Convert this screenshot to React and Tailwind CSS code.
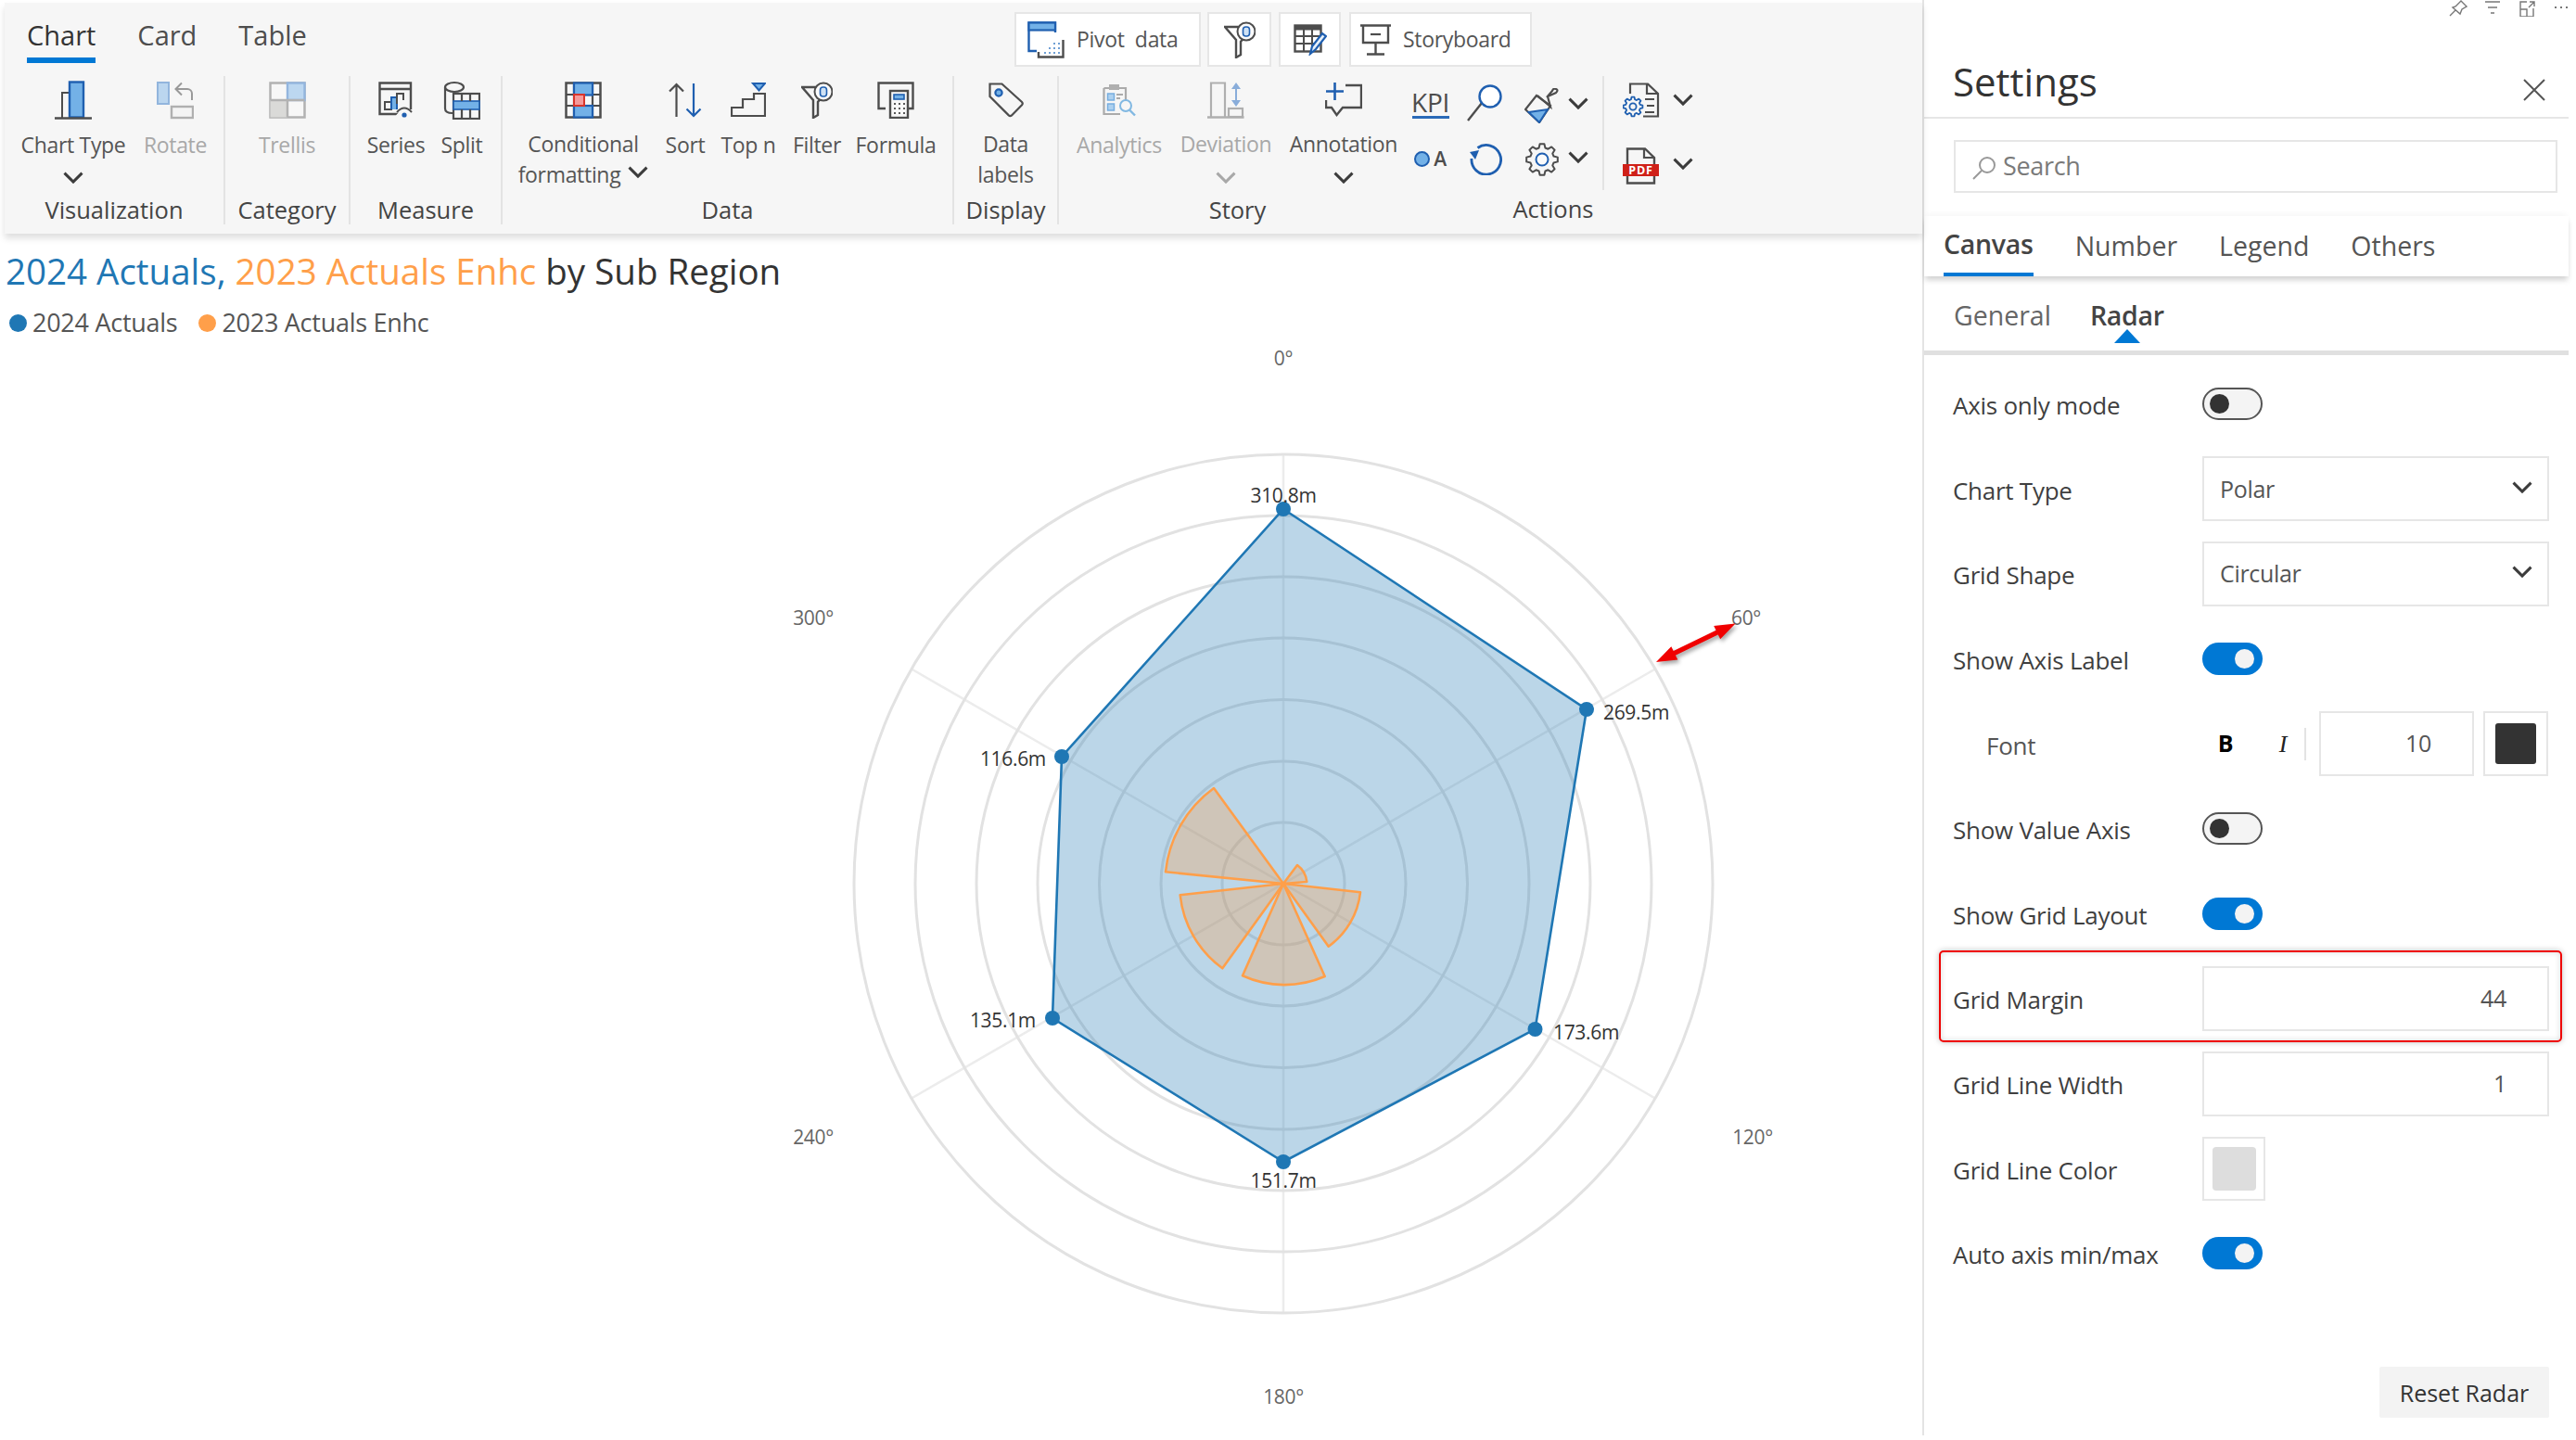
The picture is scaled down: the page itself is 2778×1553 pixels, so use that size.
import React from "react";

const G = "#4d4d4d";
const B = "#1f5fb0";
const L = "#73b1e7";

function gearPath(cx, cy, R, r, n) {
  const pts = [];
  const step = (Math.PI * 2) / n;
  for (let i = 0; i < n; i++) {
    const a = i * step - Math.PI / 2;
    const p = (rad, an) => `${(cx + rad * Math.cos(an)).toFixed(2)} ${(cy + rad * Math.sin(an)).toFixed(2)}`;
    pts.push(p(r, a - step * 0.34), p(R, a - step * 0.18), p(R, a + step * 0.18), p(r, a + step * 0.34));
  }
  return "M" + pts.join("L") + "Z";
}

function Ico({ w, h, children, className = "" }) {
  return (
    <svg width={w} height={h} viewBox={`0 0 ${w} ${h}`} fill="none" className={"shrink-0 " + className}>
      {children}
    </svg>
  );
}

function Chev({ color = "#3c3c3c", w = 22 }) {
  return (
    <svg width={w} height={w * 0.6} viewBox="0 0 22 13" fill="none" className="shrink-0">
      <path d="M1.5 1.5 L11 11 L20.5 1.5" stroke={color} strokeWidth="3" />
    </svg>
  );
}

const ChartTypeIcon = () => (
  <Ico w={40} h={42}>
    <path d="M8 40V13H15" stroke={G} strokeWidth="2" />
    <rect x="16" y="1.5" width="15" height="38" fill={L} stroke={B} strokeWidth="2.4" />
    <path d="M0 40.5H40" stroke={G} strokeWidth="2.5" />
  </Ico>
);
const RotateIcon = () => (
  <Ico w={40} h={42}>
    <rect x="1" y="2" width="12" height="23" fill="#b5d3ef" stroke="#88aedb" strokeWidth="2" />
    <path d="M38 21V14a5 5 0 0 0-5-5H21M27 2.5L20.5 9l6.5 6.5" stroke="#8f8f8f" strokeWidth="2" />
    <rect x="16" y="28" width="23" height="12" fill="#f4f4f4" stroke="#a9a9a9" strokeWidth="2.4" />
  </Ico>
);
const TrellisIcon = () => (
  <Ico w={40} h={40}>
    <rect x="1.5" y="1.5" width="37" height="37" fill="#f8f8f8" stroke="#ababab" strokeWidth="2.5" />
    <rect x="1.5" y="20" width="18.5" height="18.5" fill="#d8d7d5" />
    <rect x="20" y="1.5" width="18.5" height="18.5" fill="#b6d4f0" stroke="#89afdc" strokeWidth="2.4" />
    <path d="M20 20V38.5M1.5 20H20M20 20H38.5" stroke="#ababab" strokeWidth="2.5" />
  </Ico>
);
const SeriesIcon = () => (
  <Ico w={38} h={40}>
    <path d="M22 35H1.5V1.5H35V30" stroke={G} strokeWidth="2.4" />
    <path d="M1.5 8H35" stroke={G} strokeWidth="2.4" />
    <path d="M7 30V22H14V30Z" stroke={G} strokeWidth="2" />
    <path d="M14 30V17H20V30" fill={L} stroke={B} strokeWidth="2" />
    <path d="M20 24V13H27V20" stroke={G} strokeWidth="2" />
    <path d="M18 38q9-14 19 0z" fill="#f6f6f6" />
    <path d="M20 33q8-9 16 0" stroke={G} strokeWidth="2" />
    <circle cx="28" cy="36" r="2.6" fill={B} />
  </Ico>
);
const SplitIcon = () => (
  <Ico w={40} h={42}>
    <path d="M2 7V30q0 5 8 5" stroke={G} strokeWidth="2.2" />
    <ellipse cx="12" cy="7" rx="10" ry="5" stroke={G} strokeWidth="2.2" />
    <rect x="11" y="14" width="28" height="27" fill="#f6f6f6" stroke={G} strokeWidth="2.2" />
    <rect x="11" y="22" width="28" height="9" fill={L} stroke={B} strokeWidth="1.6" />
    <path d="M20 14V22M29 14V22M20 31V41M29 31V41" stroke={G} strokeWidth="2.2" />
  </Ico>
);
const CondIcon = () => (
  <Ico w={40} h={40}>
    <rect x="1.5" y="1.5" width="37" height="37" fill="#f8f8f8" stroke={G} strokeWidth="2.5" />
    <path d="M1.5 14H38.5M1.5 26H38.5M10 1.5V38.5M30 1.5V38.5" stroke={G} strokeWidth="2.2" />
    <rect x="10" y="1.5" width="20" height="13" fill={L} stroke={B} strokeWidth="2.2" />
    <rect x="10" y="26" width="20" height="12.5" fill={L} stroke={B} strokeWidth="2.2" />
    <rect x="10" y="14" width="11" height="12" fill="#f59a9a" stroke="#d9352b" strokeWidth="2" />
  </Ico>
);
const SortIcon = () => (
  <Ico w={36} h={38}>
    <path d="M8.5 37V2M1 9.5L8.5 2L16 9.5" stroke={G} strokeWidth="2.2" />
    <path d="M27 1V36M19.5 28.5L27 36L34.5 28.5" stroke={B} strokeWidth="2.2" />
  </Ico>
);
const TopNIcon = () => (
  <Ico w={38} h={38}>
    <path d="M1 36V27H13V18H25V12H37V36Z" stroke={G} strokeWidth="2.2" />
    <path d="M24 1H37L30.5 8.5Z" fill={L} stroke={B} strokeWidth="2" />
  </Ico>
);
const FilterIcon = () => (
  <Ico w={34} h={40}>
    <path d="M17 6H1L13 20V39l5-3V22l4-5" stroke={G} strokeWidth="2.4" />
    <circle cx="24" cy="11" r="9.5" fill="#fbfbfb" stroke={G} strokeWidth="2" />
    <rect x="20.5" y="6" width="7" height="10" rx="3" fill="#cfe2f5" stroke={B} strokeWidth="1.6" />
  </Ico>
);
const FormulaIcon = () => (
  <Ico w={40} h={40}>
    <path d="M9 29H1.5V1.5H38.5V29H33" stroke={G} strokeWidth="2.4" />
    <rect x="14" y="10" width="19" height="29" fill="#f8f8f8" stroke={G} strokeWidth="2.4" />
    <rect x="18" y="14" width="11" height="5" fill={L} stroke={B} strokeWidth="1.6" />
    <path d="M18 24h2M23 24h2M28 24h2M18 29h2M23 29h2M28 29h2M18 34h2M23 34h2M28 34h2" stroke="#5a5a5a" strokeWidth="2" />
  </Ico>
);
const TagIcon = () => (
  <Ico w={38} h={38}>
    <path d="M1.5 1.5H14.5L36 21q1.5 1.6 0 3.2L25 35.4q-1.6 1.5-3.2 0L1.5 15Z" stroke={G} strokeWidth="2.2" />
    <circle cx="11" cy="11" r="3.6" fill={L} stroke={B} strokeWidth="2.2" />
  </Ico>
);
const AnalyticsIcon = () => (
  <Ico w={36} h={36}>
    <path d="M1.5 5H25V23M19 33H1.5V5" stroke="#a3a3a3" strokeWidth="2.2" />
    <rect x="7" y="1" width="11" height="6" fill="#a8a8a8" />
    <rect x="5.5" y="11" width="7" height="7" fill="#a6cdef" stroke="#6aa7dd" strokeWidth="1.5" />
    <rect x="5.5" y="22" width="7" height="7" fill="#a6cdef" stroke="#6aa7dd" strokeWidth="1.5" />
    <path d="M15 12h7M15 16h4" stroke="#a3a3a3" strokeWidth="1.8" />
    <circle cx="25" cy="24" r="6" fill="#f6f6f6" stroke="#75b2e0" strokeWidth="2" />
    <path d="M29 28.5L35 34.5" stroke="#75b2e0" strokeWidth="2.4" />
  </Ico>
);
const DeviationIcon = () => (
  <Ico w={40} h={40}>
    <path d="M4 38V1.5H19V38" stroke="#a8a8a8" strokeWidth="2.2" />
    <rect x="23" y="29" width="15" height="9" stroke="#a8a8a8" strokeWidth="2.2" />
    <path d="M0 38.5H39.5" stroke="#a8a8a8" strokeWidth="2.4" />
    <path d="M31 6V24" stroke="#7ea6d8" strokeWidth="2" />
    <path d="M26 8L31 1L36 8ZM26 20L31 27L36 20Z" fill="#7ea6d8" />
  </Ico>
);
const AnnotationIcon = () => (
  <Ico w={40} h={40}>
    <path d="M22 4H39V28H19L12.5 36L7 28H1V20" stroke={G} strokeWidth="2.4" />
    <path d="M1 10.5H20M10.5 1V20" stroke={B} strokeWidth="2.6" />
  </Ico>
);
const PivotIcon = () => (
  <Ico w={40} h={40}>
    <path d="M10 32H1.5V1.5H30V12" stroke={B} strokeWidth="2.4" />
    <rect x="1.5" y="1.5" width="28.5" height="8" fill={L} stroke={B} strokeWidth="2.2" />
    <path d="M12 33V38.5H38.5V20" stroke={G} strokeWidth="2.4" />
    <path d="M28 24h2M33 24h2M23 29h2M28 29h2M33 29h2M18 34h2M23 34h2M28 34h2M33 34h2" stroke="#6f9fd4" strokeWidth="2" />
  </Ico>
);
const TableEditIcon = () => (
  <Ico w={36} h={34}>
    <rect x="1.5" y="1.5" width="28" height="28" fill="#fff" stroke={G} strokeWidth="2.4" />
    <rect x="1.5" y="1.5" width="28" height="5" fill={G} />
    <path d="M1.5 13H29.5M1.5 21H22M11 6V29.5M20 6V27" stroke={G} strokeWidth="2" />
    <path d="M18 32L20 24L31 10L35 13L24 27Z" fill="#e6f0fa" stroke={B} strokeWidth="2.2" />
  </Ico>
);
const BoardIcon = () => (
  <Ico w={34} h={34}>
    <path d="M0 1.5H33" stroke={G} strokeWidth="2.6" />
    <path d="M3 1.5V20H30V1.5M16.5 20V32M7 32.5H26" stroke={G} strokeWidth="2.4" />
    <path d="M11 11H22" stroke={G} strokeWidth="2.2" />
  </Ico>
);
const LensIcon = () => (
  <Ico w={40} h={40}>
    <path d="M1 39L16 20" stroke={G} strokeWidth="2.4" />
    <circle cx="25" cy="13" r="11.5" fill="#fff" stroke={B} strokeWidth="2.4" />
  </Ico>
);
const BrushIcon = () => (
  <Ico w={38} h={38}>
    <path d="M13 8L1 23L16 37L28 19Z" fill="#f6f6f6" stroke={G} strokeWidth="2.2" />
    <path d="M4.5 26L25 23L16 37Z" fill={L} stroke={B} strokeWidth="2" />
    <path d="M14 8L28 20L25 9L34 5Q37 2 34 1Q31 0 30 3L24 10" stroke={G} strokeWidth="2.2" />
  </Ico>
);
const OAIcon = () => (
  <div className="flex items-center gap-[4px]">
    <span className="block w-[17px] h-[17px] rounded-full bg-[#73b1e7] border-2 border-[#1f5fb0]" />
    <span className="text-[21px] leading-none font-semibold text-[#4d4d4d]">A</span>
  </div>
);
const RefreshIcon = () => (
  <Ico w={36} h={36}>
    <path d="M9.5 6.5A15.8 15.8 0 1 1 3 18" stroke={B} strokeWidth="2.8" />
    <path d="M1 11L11 9L7 19Z" fill={B} />
  </Ico>
);
const GearIcon = () => (
  <Ico w={36} h={36}>
    <path d={gearPath(18, 18, 17, 13, 8)} stroke={G} strokeWidth="2" strokeLinejoin="round" />
    <circle cx="18" cy="18" r="6.5" fill="#fbfbfb" stroke={B} strokeWidth="2" />
  </Ico>
);
const DocGearIcon = () => (
  <Ico w={40} h={38}>
    <path d="M8 12V1.5H27L38 12V36.5H22" stroke={G} strokeWidth="2.2" />
    <path d="M26 1.5V12H38" stroke={G} strokeWidth="2.2" />
    <path d="M24 18H34M26 25H34M24 32H34" stroke={G} strokeWidth="2.2" />
    <path d={gearPath(11, 26, 10.5, 8, 8)} fill="#f6f6f6" stroke={B} strokeWidth="1.8" strokeLinejoin="round" />
    <circle cx="11" cy="26" r="3.6" stroke={B} strokeWidth="1.8" />
  </Ico>
);
const PdfIcon = () => (
  <Ico w={40} h={40}>
    <path d="M5 18V1.5H24L34 11V18M5 31V38.5H34V31" stroke={G} strokeWidth="2.4" />
    <path d="M23 1.5V11H34" stroke={G} strokeWidth="2.2" />
    <rect x="0" y="18" width="39" height="13" fill="#cf2018" />
    <text x="19.5" y="29" textAnchor="middle" fontSize="12.5" fontWeight="700" fill="#fff" letterSpacing="0.8">PDF</text>
  </Ico>
);

function Item({ w, icon, label, label2, chev, inlineChev, disabled }) {
  return (
    <div className="flex flex-col items-center shrink-0" style={{ width: w }}>
      <div className={"h-[42px] flex items-center justify-center " + (disabled ? "opacity-90" : "")}>{icon}</div>
      <div className={"mt-[11px] text-[23px] leading-[33px] whitespace-nowrap text-center " + (disabled ? "text-[#a8a8a8]" : "text-[#555555]")}>
        {label}
      </div>
      {label2 && (
        <div className={"text-[23px] leading-[33px] whitespace-nowrap flex items-center gap-[8px] " + (disabled ? "text-[#a8a8a8]" : "text-[#555555]")}>
          {label2}
          {inlineChev && <span className="block mb-[5px]"><Chev /></span>}
        </div>
      )}
      {chev && (
        <div className="h-[33px] pt-[5px] flex items-center justify-center">
          <Chev color={disabled ? "#a8a8a8" : "#3c3c3c"} />
        </div>
      )}
    </div>
  );
}

function Group({ w, label, sep = true, pl = 0, children }) {
  return (
    <div className={"h-[160px] flex flex-col shrink-0 " + (sep ? "border-r-2 border-[#e3e3e3]" : "")} style={{ width: w }}>
      <div className="h-[123px] pt-[5px] flex" style={{ paddingLeft: pl }}>
        {children}
      </div>
      <div className="h-[37px] pt-[6px] flex items-center justify-center text-[25.5px] tracking-normal font-medium text-[#444444] whitespace-nowrap">
        {label}
      </div>
    </div>
  );
}

function TopBtn({ children, className = "" }) {
  return (
    <div className={"h-[59px] bg-white border-2 border-[#e6e6e6] flex items-center text-[23px] text-[#555555] " + className}>
      {children}
    </div>
  );
}

function Ribbon() {
  return (
    <div className="ml-[5px] mt-[3px] h-[249px] w-[2068px] bg-[#f6f6f6] shadow-[0_5px_7px_rgba(0,0,0,0.13)] relative">
      <div className="h-[79px] flex">
        <div className="pl-[24px] flex gap-[45px] w-[1089px] text-[29px] tracking-normal text-[#4d4d4d]">
          <div className="h-[65px] pt-[15px] leading-[40px] border-b-[6px] border-[#0078d4] text-[#333333]">Chart</div>
          <div className="h-[65px] pt-[15px] leading-[40px]">Card</div>
          <div className="h-[65px] pt-[15px] leading-[40px]">Table</div>
        </div>
        <div className="pt-[10px] flex">
          <TopBtn className="w-[201px] pl-[12px] gap-[13px]"><PivotIcon /><span className="whitespace-nowrap">Pivot&nbsp; data</span></TopBtn>
          <TopBtn className="w-[69px] ml-[7px] justify-center"><FilterIcon /></TopBtn>
          <TopBtn className="w-[67px] ml-[8px] justify-center"><TableEditIcon /></TopBtn>
          <TopBtn className="w-[197px] ml-[9px] pl-[10px] gap-[12px]"><BoardIcon /><span>Storyboard</span></TopBtn>
        </div>
      </div>
      <div className="flex">
        <Group w={238} label="Visualization">
          <Item w={148} icon={<ChartTypeIcon />} label="Chart Type" chev />
          <Item w={72} icon={<RotateIcon />} label="Rotate" disabled />
        </Group>
        <Group w={135} label="Category">
          <Item w={133} icon={<TrellisIcon />} label="Trellis" disabled />
        </Group>
        <Group w={164} label="Measure" pl={14}>
          <Item w={70} icon={<SeriesIcon />} label="Series" />
          <Item w={72} icon={<SplitIcon />} label="Split" />
        </Group>
        <Group w={487} label="Data">
          <Item w={174} icon={<CondIcon />} label="Conditional" label2="formatting" inlineChev />
          <Item w={46} icon={<SortIcon />} label="Sort" />
          <Item w={90} icon={<TopNIcon />} label="Top n" />
          <Item w={58} icon={<FilterIcon />} label="Filter" />
          <Item w={112} icon={<FormulaIcon />} label="Formula" />
        </Group>
        <Group w={113} label="Display">
          <Item w={111} icon={<TagIcon />} label="Data" label2="labels" />
        </Group>
        <Group w={385} label="Story" sep={false}>
          <Item w={130} icon={<AnalyticsIcon />} label="Analytics" disabled />
          <Item w={100} icon={<DeviationIcon />} label="Deviation" chev disabled />
          <Item w={154} icon={<AnnotationIcon />} label="Annotation" chev />
        </Group>
        <div className="w-[296px] h-[160px] flex flex-col shrink-0">
          <div className="h-[123px] grid grid-cols-[31px_87px_36px_42px_7px_80px_10px] grid-rows-[61px_62px]">
            <div className="flex flex-col items-center justify-center pb-[2px]">
              <span className="text-[28px] leading-[30px] font-medium text-[#4d4d4d]">KPI</span>
              <span className="block w-[40px] h-[3px] bg-[#2a6ab8]" />
            </div>
            <div className="flex items-center justify-center pb-[4px]"><LensIcon /></div>
            <div className="flex items-center justify-center pt-[2px]"><BrushIcon /></div>
            <div className="flex items-center justify-center pb-[2px]"><Chev /></div>
            <div className="border-r-2 border-[#e3e3e3]" />
            <div className="flex items-center justify-center pb-[10px]"><DocGearIcon /></div>
            <div className="flex items-center justify-center pb-[9px]"><Chev /></div>
            <div className="flex items-center justify-center overflow-visible pb-[6px]"><OAIcon /></div>
            <div className="flex items-center justify-center pb-[6px]"><RefreshIcon /></div>
            <div className="flex items-center justify-center pb-[4px]"><GearIcon /></div>
            <div className="flex items-center justify-center pb-[8px]"><Chev /></div>
            <div className="border-r-2 border-[#e3e3e3]" />
            <div className="flex items-center justify-center pt-[10px]"><PdfIcon /></div>
            <div className="flex items-center justify-center pt-[6px]"><Chev /></div>
          </div>
          <div className="h-[37px] pt-[3px] flex items-center justify-center text-[25.5px] tracking-normal font-medium text-[#444444]">Actions</div>
        </div>
      </div>
    </div>
  );
}

const CX = 1384, CY = 953, RS = [66, 132, 198.5, 265, 331, 397, 463];
const sectors = [
  [[171, 421], [327, 150], 127.7],
  [[597, 399], [628, 453], 25.4],
  [[801, 487], [698, 662], 83],
  [[686, 759], [420, 757], 109],
  [[355, 733], [218, 496], 112],
];
const z = ([x, y]) => `${(1200 + x / 3).toFixed(1)} ${(800 + y / 3).toFixed(1)}`;

function Radar() {
  const angles = [0, 60, 120];
  const spokes = angles.map((a) => {
    const r = (a * Math.PI) / 180;
    return [CX + 463 * Math.sin(r), CY - 463 * Math.cos(r), CX - 463 * Math.sin(r), CY + 463 * Math.cos(r)];
  });
  const poly = [[1384, 549], [1711, 765], [1655.5, 1110], [1384, 1253], [1135, 1098], [1145, 816]];
  const vals = [
    ["310.8m", 1384, 534, "middle"],
    ["269.5m", 1729, 768, "start"],
    ["173.6m", 1675, 1113, "start"],
    ["151.7m", 1384, 1273, "middle"],
    ["135.1m", 1117, 1100, "end"],
    ["116.6m", 1128, 818, "end"],
  ];
  const axis = [["0°", 1384, 386], ["60°", 1883, 666], ["120°", 1890, 1226], ["180°", 1384, 1506], ["240°", 877, 1226], ["300°", 877, 666]];
  return (
    <svg width="2068" height="1187" viewBox="0 366 2068 1187" className="block">
      {spokes.map((s, i) => (
        <line key={i} x1={s[0]} y1={s[1]} x2={s[2]} y2={s[3]} stroke="#ececec" strokeWidth="2.5" />
      ))}
      {RS.map((r) => (
        <circle key={r} cx={CX} cy={CY} r={r} fill="none" stroke="#e2e2e2" strokeWidth="3" />
      ))}
      <polygon points={poly.map((p) => p.join(",")).join(" ")} fill="#1f77b4" fillOpacity="0.3" stroke="#1f77b4" strokeWidth="2.6" />
      {poly.map((p, i) => (
        <circle key={i} cx={p[0]} cy={p[1]} r="8" fill="#1f77b4" />
      ))}
      {sectors.map(([a, b, r], i) => (
        <path key={i} d={`M${CX} ${CY}L${z(a)}A${r} ${r} 0 0 1 ${z(b)}Z`} fill="#ff9f4a" fillOpacity="0.3" stroke="#ff9f4a" strokeWidth="2.6" strokeLinejoin="round" />
      ))}
      {vals.map(([t, x, y, an]) => (
        <text key={t} x={x} y={y} dy="0.36em" textAnchor={an} fontSize="21" fill="#333333">{t}</text>
      ))}
      {axis.map(([t, x, y]) => (
        <text key={t} x={x} y={y} dy="0.36em" textAnchor="middle" fontSize="21" fill="#666666">{t}</text>
      ))}
      <g style={{ filter: "drop-shadow(2px 3px 2px rgba(0,0,0,0.35))" }}>
        <path d="M1786 714L1802.3 697.2L1804.7 702.1L1850.6 679.8L1848.2 674.9L1871.5 672.5L1855.2 689.3L1852.8 684.4L1806.9 706.7L1809.3 711.6Z" fill="#f00000" />
      </g>
    </svg>
  );
}

function Toggle({ on }) {
  return on ? (
    <div className="w-[65px] h-[35px] rounded-[18px] bg-[#0078d4] flex items-center justify-end pr-[9px] mb-[4px]">
      <span className="block w-[21px] h-[21px] rounded-full bg-[#f3f3f3]" />
    </div>
  ) : (
    <div className="w-[65px] h-[35px] rounded-[18px] bg-[#f4f4f4] border-2 border-[#555555] flex items-center pl-[6px] mb-[4px]">
      <span className="block w-[21px] h-[21px] rounded-full bg-[#333333]" />
    </div>
  );
}

function Row({ label, indent, children, overlay }) {
  return (
    <div className="h-[91.6px] pl-[31px] flex items-center relative">
      <div className={"w-[269px] text-[26px] tracking-[-0.01em] whitespace-nowrap " + (indent ? "pl-[36px] text-[#555555]" : "font-medium text-[#3f3f3f]")}>{label}</div>
      {children}
      {overlay}
    </div>
  );
}

function Select({ value }) {
  return (
    <div className="w-[374px] h-[70px] mb-[4px] border-2 border-[#e6e6e6] flex items-center justify-between pl-[17px] pr-[16px] text-[25px] text-[#555555]">
      <span>{value}</span>
      <span className="mb-[4px]"><Chev /></span>
    </div>
  );
}

function NumInput({ value, h = 70 }) {
  return (
    <div className="w-[374px] mb-[4px] border-2 border-[#e6e6e6] flex items-center justify-end pr-[44px] text-[25px] text-[#555555]" style={{ height: h }}>
      {value}
    </div>
  );
}

function Settings() {
  return (
    <div className="w-[705px] h-[1548px] border-l-2 border-[#e4e4e4] flex flex-col shrink-0 bg-white">
      <div className="h-[18px] flex justify-end items-start pr-[6px] gap-[17px] text-[#888888]">
        <Ico w={20} h={18}>
          <path d="M7 7L13 1L19 7L14 10L12 15L4 8ZM7 11L1 17" stroke="#777" strokeWidth="1.4" />
        </Ico>
        <Ico w={20} h={18}>
          <path d="M2 2H18M5 8H15M8 14H12" stroke="#777" strokeWidth="1.6" />
        </Ico>
        <Ico w={20} h={18}>
          <path d="M10 2H3V18H17V9M3 10H10V18M12 8L18 2M13 2H18V7" stroke="#777" strokeWidth="1.4" />
        </Ico>
        <Ico w={20} h={18}>
          <path d="M3 8h2M9 8h2M15 8h2" stroke="#777" strokeWidth="2" />
        </Ico>
      </div>
      <div className="h-[110px] mr-[8px] pl-[31px] pr-[25px] pt-[46px] border-b-2 border-[#e6e6e6] flex justify-between">
        <span className="text-[42px] leading-[48px] tracking-normal text-[#333333]">Settings</span>
        <svg width="24" height="24" viewBox="0 0 24 24" fill="none" className="mt-[21px]">
          <path d="M1 1L23 23M23 1L1 23" stroke="#555" strokeWidth="2" />
        </svg>
      </div>
      <div className="mt-[23px] ml-[32px] w-[651px] h-[57px] border-2 border-[#e6e6e6] flex items-center pl-[17px] gap-[6px] text-[27px] text-[#7a7a7a]">
        <svg width="28" height="28" viewBox="0 0 28 28" fill="none" className="mt-[2px]">
          <circle cx="17" cy="11" r="8" stroke="#999" strokeWidth="2" />
          <path d="M11 17L2 26" stroke="#999" strokeWidth="2" />
        </svg>
        <span>Search</span>
      </div>
      <div className="mt-[25px] h-[65px] mr-[8px] pl-[21px] flex gap-[45px] text-[28.5px] tracking-normal text-[#555555] shadow-[0_5px_6px_-1px_rgba(0,0,0,0.18),0_-4px_6px_-2px_rgba(0,0,0,0.04)]">
        <div className="h-full flex items-center border-b-4 border-[#0078d4] font-semibold tracking-[-0.01em] text-[#444444]">Canvas</div>
        <div className="h-full flex items-center">Number</div>
        <div className="h-full flex items-center">Legend</div>
        <div className="h-full flex items-center">Others</div>
      </div>
      <div className="h-[85px] mr-[8px] pl-[32px] pt-[5px] flex gap-[42px] items-center border-b-[5px] border-[#e0e0e0] text-[28.5px] tracking-normal text-[#666666]">
        <span>General</span>
        <span className="relative font-semibold tracking-[-0.01em] text-[#444444]">
          Radar
          <span className="absolute left-1/2 -translate-x-1/2 top-[36px] w-0 h-0 border-l-[14px] border-r-[14px] border-b-[15px] border-l-transparent border-r-transparent border-b-[#0078d4]" />
        </span>
      </div>
      <div className="mt-[9px]">
        <Row label="Axis only mode"><Toggle /></Row>
        <Row label="Chart Type"><Select value="Polar" /></Row>
        <Row label="Grid Shape"><Select value="Circular" /></Row>
        <Row label="Show Axis Label"><Toggle on /></Row>
        <Row label="Font" indent>
          <div className="flex items-center mb-[4px] h-[70px] text-[#555555]">
            <span className="w-[50px] text-center text-[25px] font-bold text-black">B</span>
            <span className="w-[48px] ml-[14px] h-[35px] flex items-center justify-center border-r-2 border-[#e3e3e3] [font-family:'Liberation_Serif',serif] italic text-[26px] text-[#222222]">I</span>
            <div className="ml-[14px] w-[167px] h-[70px] border-2 border-[#e6e6e6] flex items-center justify-end pr-[44px] text-[25px]">10</div>
            <div className="ml-[10px] w-[70px] h-[70px] border-2 border-[#e6e6e6] flex items-center justify-center">
              <span className="block w-[44px] h-[44px] rounded-[3px] bg-[#333333]" />
            </div>
          </div>
        </Row>
        <Row label="Show Value Axis"><Toggle /></Row>
        <Row label="Show Grid Layout"><Toggle on /></Row>
        <Row
          label="Grid Margin"
          overlay={
            <div className="absolute left-[16px] top-[-8px] w-[672px] h-[99px] rounded-[5px] border-2 border-[#ee0000] shadow-[0_0_6px_rgba(0,0,0,0.25),inset_0_0_6px_rgba(0,0,0,0.15)] pointer-events-none" />
          }
        >
          <NumInput value="44" />
        </Row>
        <Row label="Grid Line Width"><NumInput value="1" /></Row>
        <Row label="Grid Line Color">
          <div className="w-[68px] h-[69px] mb-[4px] border-2 border-[#e6e6e6] flex items-center justify-center">
            <span className="block w-[47px] h-[47px] rounded-[4px] bg-[#dddddd]" />
          </div>
        </Row>
        <Row label="Auto axis min/max"><Toggle on /></Row>
      </div>
      <div className="mt-[74px] ml-auto mr-[29px] w-[183px] h-[55px] pt-[4px] rounded-[2px] bg-[#f3f3f3] flex items-center justify-center text-[25px] tracking-normal text-[#333333]">
        Reset Radar
      </div>
    </div>
  );
}

export default function App() {
  return (
    <div className="w-[2778px] h-[1553px] bg-white overflow-hidden flex [font-family:'Open_Sans',sans-serif] tracking-[-0.02em]">
      <div className="w-[2073px] shrink-0 flex flex-col">
        <Ribbon />
        <div className="ml-[6px] mt-[17px] h-[48px] flex items-center text-[38.5px] tracking-normal font-medium whitespace-nowrap">
          <span className="text-[#1f77b4]">2024 Actuals,&nbsp;</span>
          <span className="text-[#ff9f4a]">2023 Actuals Enhc&nbsp;</span>
          <span className="text-[#333333]">by Sub Region</span>
        </div>
        <div className="ml-[10px] mt-[13px] h-[36px] flex items-center text-[27px] tracking-[-0.01em] text-[#555555] whitespace-nowrap">
          <span className="block w-[19px] h-[19px] rounded-full bg-[#1f77b4] mr-[6px]" />
          <span>2024 Actuals</span>
          <span className="block w-[19px] h-[19px] rounded-full bg-[#ff9f4a] ml-[23px] mr-[6px]" />
          <span>2023 Actuals Enhc</span>
        </div>
        <div>
          <Radar />
        </div>
      </div>
      <Settings />
    </div>
  );
}
